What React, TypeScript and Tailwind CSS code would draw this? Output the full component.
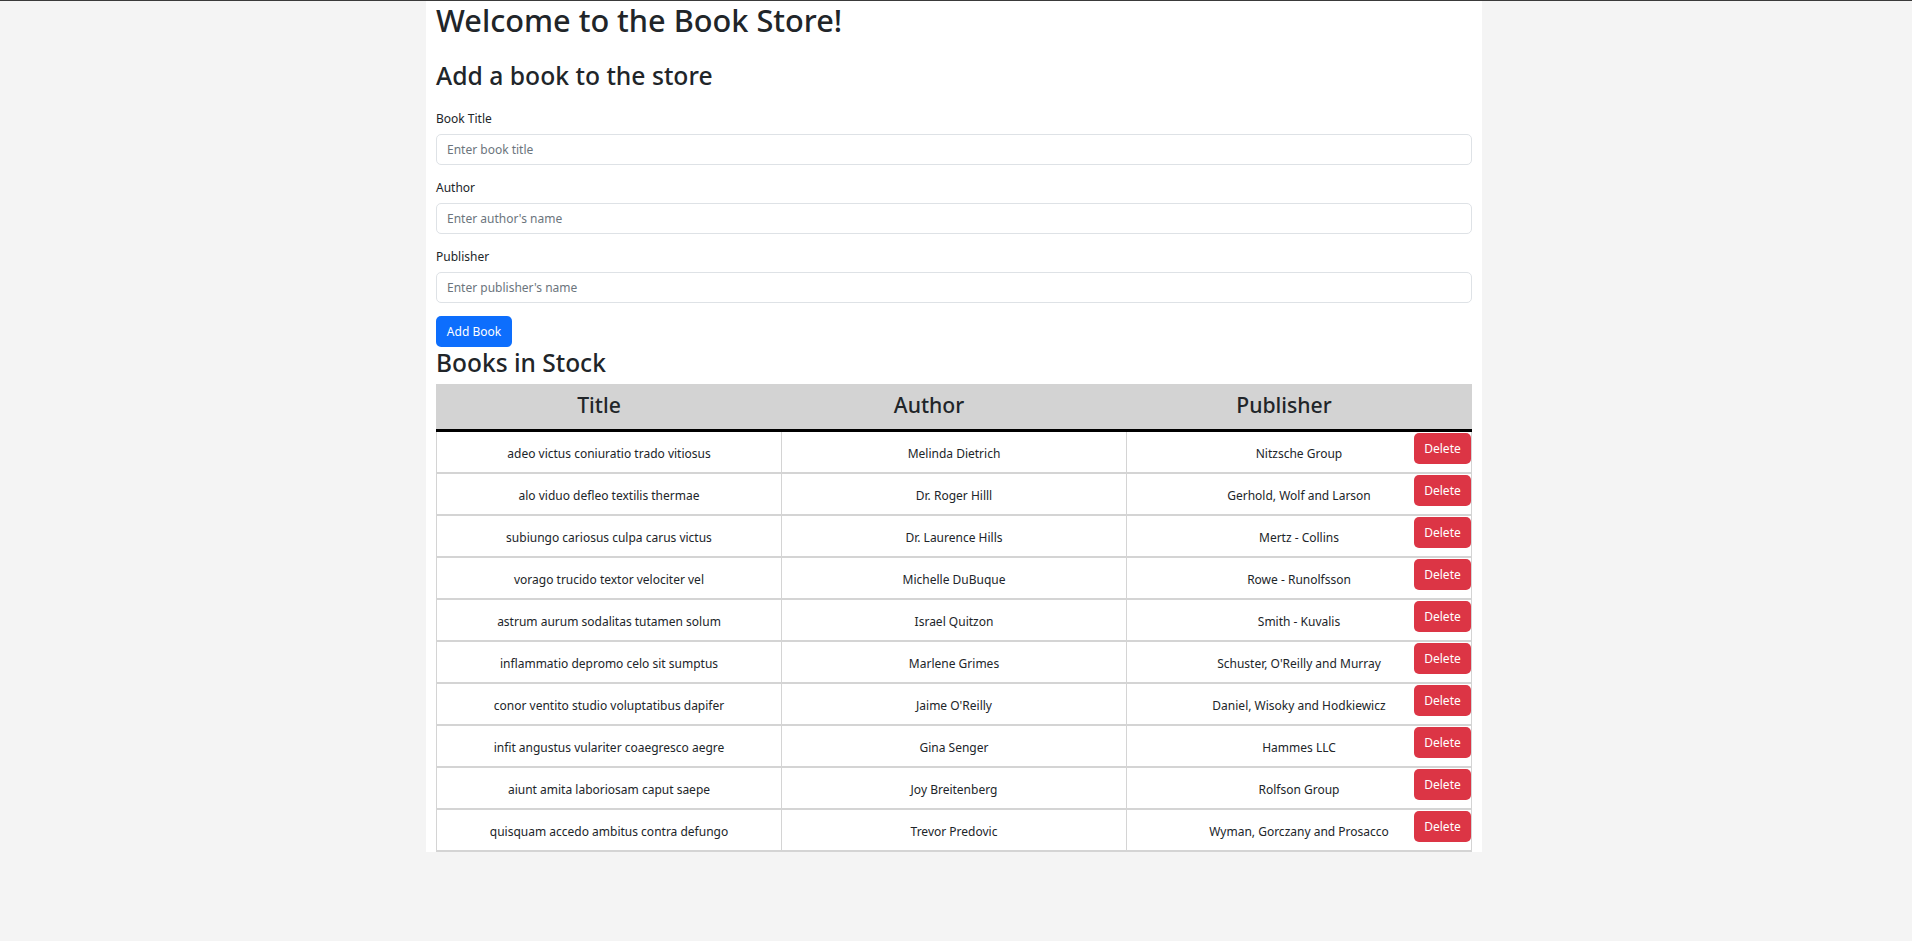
import { useState } from "react";

type Book = {
  title: string;
  author: string;
  publisher: string;
};

const initialBooks: Book[] = [
  { title: "adeo victus coniuratio trado vitiosus", author: "Melinda Dietrich", publisher: "Nitzsche Group" },
  { title: "alo viduo defleo textilis thermae", author: "Dr. Roger Hilll", publisher: "Gerhold, Wolf and Larson" },
  { title: "subiungo cariosus culpa carus victus", author: "Dr. Laurence Hills", publisher: "Mertz - Collins" },
  { title: "vorago trucido textor velociter vel", author: "Michelle DuBuque", publisher: "Rowe - Runolfsson" },
  { title: "astrum aurum sodalitas tutamen solum", author: "Israel Quitzon", publisher: "Smith - Kuvalis" },
  { title: "inflammatio depromo celo sit sumptus", author: "Marlene Grimes", publisher: "Schuster, O'Reilly and Murray" },
  { title: "conor ventito studio voluptatibus dapifer", author: "Jaime O'Reilly", publisher: "Daniel, Wisoky and Hodkiewicz" },
  { title: "infit angustus vulariter coaegresco aegre", author: "Gina Senger", publisher: "Hammes LLC" },
  { title: "aiunt amita laboriosam caput saepe", author: "Joy Breitenberg", publisher: "Rolfson Group" },
  { title: "quisquam accedo ambitus contra defungo", author: "Trevor Predovic", publisher: "Wyman, Gorczany and Prosacco" },
];

// Form field with a small label above it
const Field = ({ label, placeholder }: { label: string; placeholder: string }) => (
  <div className="mb-[13px]">
    <label className="block text-[12px] leading-[19px] mb-[6px]">{label}</label>
    <input
      type="text"
      placeholder={placeholder}
      className="block w-full h-[31px] rounded-[5px] border border-[#dee2e6] bg-white px-[10px] text-[12px] outline-none placeholder:text-[#6c757d]"
    />
  </div>
);

const App = () => {
  const [books, setBooks] = useState<Book[]>(initialBooks);

  const removeBook = (index: number) => {
    setBooks(books.filter((_, i) => i !== index));
  };

  return (
    <div className="min-h-screen border-t border-[#3a3a3a] bg-[#f4f4f4] font-['Noto_Sans',sans-serif] text-[#212529]">
      <div className="ml-[426px] w-[1056px] bg-white px-[10px]">
        <h1 className="text-[30.7px] font-medium leading-[38px] mb-[22px]">Welcome to the Book Store!</h1>
        <h2 className="text-[24.7px] font-medium leading-[30px] mb-[18px]">Add a book to the store</h2>

        <form onSubmit={(e) => e.preventDefault()}>
          <Field label="Book Title" placeholder="Enter book title" />
          <Field label="Author" placeholder="Enter author's name" />
          <Field label="Publisher" placeholder="Enter publisher's name" />
          <button
            type="submit"
            className="block h-[31px] w-[76px] rounded-[5px] bg-[#0d6efd] text-[12px] text-white"
          >
            Add Book
          </button>
        </form>

        <h2 className="mt-[1px] mb-[6px] text-[24.5px] font-medium leading-[30px]">Books in Stock</h2>

        <div className="w-full">
          {/* header */}
          <div className="grid h-[45px] grid-cols-[326px_334px_1fr] items-center bg-[#d3d3d3] border-b-[3px] border-black box-content pb-0 text-[21.2px] font-medium">
            <div className="text-center -mt-[3px]">Title</div>
            <div className="text-center -mt-[3px]">Author</div>
            <div className="text-center -mt-[3px]">Publisher</div>
          </div>

          {/* rows */}
          {books.map((book, i) => (
            <div
              key={i}
              className="grid h-[42px] grid-cols-[345px_345px_1fr] border-x border-b-2 border-[#d4d4d4] text-[12px]"
            >
              <div className="flex items-center justify-center border-r border-[#d4d4d4] pt-[3px]">{book.title}</div>
              <div className="flex items-center justify-center border-r border-[#d4d4d4] pt-[3px]">{book.author}</div>
              <div className="grid">
                <div className="col-start-1 row-start-1 flex items-center justify-center pt-[3px]">{book.publisher}</div>
                <button
                  onClick={() => removeBook(i)}
                  className="col-start-1 row-start-1 mt-[1px] h-[31px] w-[57px] justify-self-end self-start rounded-[5px] bg-[#dc3545] text-[12px] text-white"
                >
                  Delete
                </button>
              </div>
            </div>
          ))}
        </div>
      </div>
    </div>
  );
};

export default App;
